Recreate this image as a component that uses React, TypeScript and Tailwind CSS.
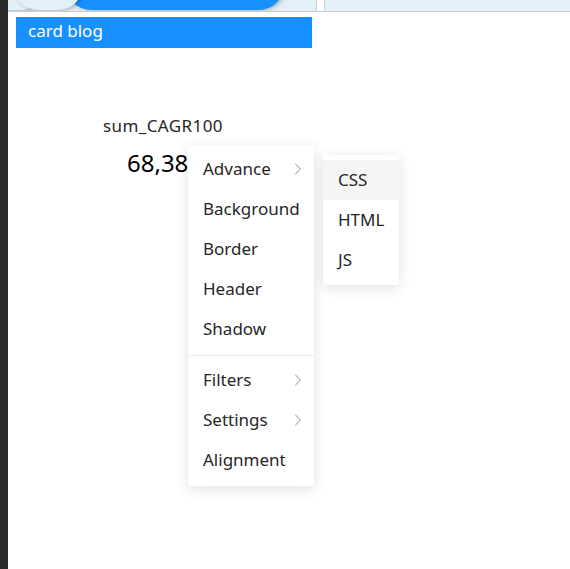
import { ChevronRight } from 'lucide-react'

const mainItems = ['Advance', 'Background', 'Border', 'Header', 'Shadow']
const lowerItems = [
  { label: 'Filters', sub: true },
  { label: 'Settings', sub: true },
  { label: 'Alignment', sub: false },
]

function MenuRow({ label, sub, active }: { label: string; sub?: boolean; active?: boolean }) {
  return (
    <div className={`h-10 flex items-center justify-between pl-[15px] pr-[6px] ${active ? 'bg-[#f5f5f5]' : ''}`}>
      <span className="leading-5 -mt-px">{label}</span>
      {sub && <ChevronRight size={20} strokeWidth={1.2} className="text-[#8c8c8c]" />}
    </div>
  )
}

export default function App() {
  return (
    <div className="flex h-[569px] w-[570px] bg-white text-[17px] text-[#262626] font-['Noto_Sans',sans-serif]">
      <div className="w-2 shrink-0 bg-[#2b2b2b]" />
      <div className="relative flex-1 flex flex-col">
        {/* top strip */}
        <div className="flex h-3 border-b border-[#c8cdd2]">
          <div className="relative w-[309px] overflow-hidden bg-[#e1f0f9] border-r border-[#c8cdd2]">
            <div className="absolute -top-10 -left-8 w-[70px] h-[50px] rounded-full bg-[#e1f0f9] shadow-[2px_1px_4px_rgba(0,0,0,0.25)]" />
            <div className="absolute -top-10 left-[58px] w-[218px] h-[50px] rounded-full bg-[#1890ff] shadow-[2px_1px_4px_rgba(0,0,0,0.25)]" />
            <div className="absolute -top-10 left-[5px] w-[70px] h-[50px] rounded-full bg-[#e1f0f9] shadow-[2px_1px_4px_rgba(0,0,0,0.25)]" />
          </div>
          <div className="w-[7px] bg-white" />
          <div className="flex-1 bg-[#e1f0f9] border-l border-[#c8cdd2]" />
        </div>

        <div className="ml-2 mt-[5px] h-[31px] w-[296px] bg-[#1890ff] pl-3 flex items-center text-white text-[17px]">
          <span className="-mt-[3px]">card blog</span>
        </div>

        <div className="ml-[95px] mt-[68px] text-[17px] tracking-[0.4px] leading-5 text-[#262626]">sum_CAGR100</div>
        <div className="ml-[119px] mt-[11px] text-[24px] leading-8 text-black">68,38</div>

        {/* context menu */}
        <div className="absolute left-[180px] top-[145px] w-[126px] bg-white rounded-[3px] pt-1 pb-[6px] shadow-[0_3px_14px_rgba(0,0,0,0.12)]">
          {mainItems.map((l, i) => (
            <MenuRow key={l} label={l} sub={i === 0} />
          ))}
          <div className="mt-[6px] mb-[4px] h-px bg-[#ececec]" />
          {lowerItems.map(it => (
            <MenuRow key={it.label} label={it.label} sub={it.sub} />
          ))}
        </div>

        {/* submenu */}
        <div className="absolute left-[315px] top-[155px] w-[76px] bg-white rounded-[3px] pt-[5px] pb-[5px] shadow-[0_3px_14px_rgba(0,0,0,0.12)]">
          <MenuRow label="CSS" active />
          <MenuRow label="HTML" />
          <MenuRow label="JS" />
        </div>
      </div>
    </div>
  )
}
